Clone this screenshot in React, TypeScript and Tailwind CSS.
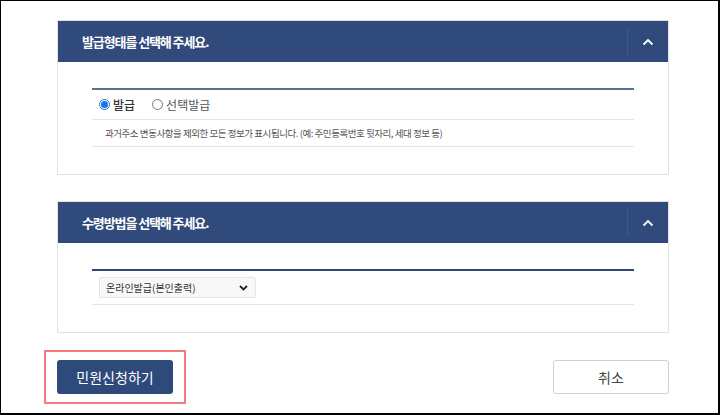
import React from 'react';

const font = { fontFamily: '"Noto Sans CJK KR", "Noto Sans", sans-serif' };

const PanelHeader: React.FC<{ title: string }> = ({ title }) => (
  <div className="flex h-[41px] items-center justify-between bg-[#304b7b]">
    <h2 className="pl-[24px] text-[13px] font-bold tracking-[-1.1px] text-white">{title}</h2>
    <div className="flex h-full items-center">
      <div className="h-[27px] w-px bg-[#3f5a88]" />
      <button className="flex h-full w-[40px] items-center justify-center text-white">
        <svg width="12" height="8" viewBox="0 0 12 8" fill="none">
          <path d="M1.5 6.5 L6 2 L10.5 6.5" stroke="white" strokeWidth="1.8" />
        </svg>
      </button>
    </div>
  </div>
);

const App: React.FC = () => {
  return (
    <div
      className="h-[415px] w-[720px] border-b-2 border-l border-r-2 border-t border-black bg-white"
      style={font}
    >
      <div className="ml-[56px] mt-[19px] w-[612px]">
        {/* 발급형태 */}
        <section className="border border-[#e2e2e2]">
          <PanelHeader title="발급형태를 선택해 주세요." />
          <div className="px-[34px] pb-[27px] pt-[26px]">
            <div className="border-t-2 border-[#5a6f96]">
              <div className="flex h-[30px] items-center gap-[17px] border-b border-[#e4e4e4] pl-[7px] text-[12px] text-[#333]">
                <label className="flex items-center gap-[3px] font-medium">
                  <span className="flex h-[11px] w-[11px] items-center justify-center rounded-full border border-[#1a73e8]">
                    <span className="h-[7px] w-[7px] rounded-full bg-[#1a73e8]" />
                  </span>
                  발급
                </label>
                <label className="flex items-center gap-[3px] text-[#555]">
                  <span className="h-[11px] w-[11px] rounded-full border border-[#777]" />
                  선택발급
                </label>
              </div>
              <div className="flex h-[27px] items-center border-b border-[#e4e4e4] pl-[13px] text-[9.5px] tracking-[-0.45px] text-[#555]">
                과거주소 변동사항을 제외한 모든 정보가 표시됩니다. (예: 주민등록번호 뒷자리, 세대 정보 등)
              </div>
            </div>
          </div>
        </section>

        {/* 수령방법 */}
        <section className="mt-[26px] border border-[#e2e2e2]">
          <PanelHeader title="수령방법을 선택해 주세요." />
          <div className="px-[34px] pb-[27px] pt-[26px]">
            <div className="border-t-2 border-[#2c4778]">
              <div className="flex h-[34px] items-center border-b border-[#e4e4e4] pl-[7px]">
                <div className="flex h-[21px] w-[157px] items-center justify-between rounded-[2px] border border-[#e6e6e6] bg-[#f8f8f8] pl-[6px] pr-[7px] text-[10px] text-[#333]">
                  <span>온라인발급(본인출력)</span>
                  <svg width="9" height="6" viewBox="0 0 9 6" fill="none">
                    <path d="M1 1 L4.5 4.5 L8 1" stroke="#222" strokeWidth="1.8" />
                  </svg>
                </div>
              </div>
            </div>
          </div>
        </section>

        {/* 버튼 */}
        <div className="mt-[17px] flex items-start justify-between">
          <div className="-ml-[13px] border-2 border-[#f47c7c] px-[11px] py-[8px]">
            <button className="h-[34px] w-[116px] rounded-[3px] bg-[#2e4a7b] text-[14px] text-white">
              민원신청하기
            </button>
          </div>
          <button className="mt-[10px] h-[34px] w-[116px] rounded-[3px] border border-[#cfcfcf] bg-white text-[14px] text-[#444]">
            취소
          </button>
        </div>
      </div>
    </div>
  );
};

export default App;
